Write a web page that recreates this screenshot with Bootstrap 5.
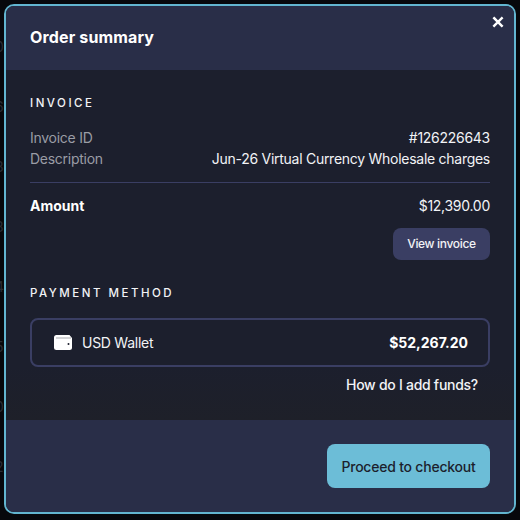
<!DOCTYPE html>
<html lang="en">
<head>
<meta charset="utf-8">
<title>Order summary</title>
<link href="https://cdn.jsdelivr.net/npm/bootstrap@5.3.0/dist/css/bootstrap.min.css" rel="stylesheet">
<style>
html, body { height: 520px; overflow: hidden; }
body { background: #07080c; font-family: Inter, "Liberation Sans", sans-serif; font-size: 14px; letter-spacing: -0.27px; color: #f2f3f6; }
.backdrop-digits { position: absolute; left: -5px; top: 17px; width: 12px; color: #2b2d33; font-size: 14px; line-height: 60px; letter-spacing: 0; }
.summary-shell { position: absolute; left: 4px; top: 4px; width: 512px; height: 510px; border: 2px solid #62b5d0; border-radius: 10px; background: #1c1f2d; overflow: hidden; }
.summary-head { height: 64px; background: #292e48; padding: 0 24px; }
.summary-title { font-size: 16px; font-weight: 700; letter-spacing: .15px; color: #fff; margin: 0; }
.summary-close { position: absolute; right: 10px; top: 10px; width: 12px; height: 12px; padding: 0; background: none; border: 0; line-height: 0; }
.summary-body { height: 350px; padding: 24px 24px 0; background: linear-gradient(#1c1f2d 85%, #1e2029); }
.summary-label { font-size: 11.5px; font-weight: 500; letter-spacing: 2.5px; color: #f2f3f6; line-height: 18px; margin: 0; }
.summary-row { line-height: 21px; }
.rows-gap { margin-top: 15px; }
.rule-gap { margin: 13px 0 12px; }
.button-gap { margin-top: 12px; }
.summary-muted { color: #9a9ca5; }
.summary-rule { border: 0; border-top: 1px solid #3a3e63; opacity: 1; }
.summary-strong { font-weight: 700; color: #fff; letter-spacing: 0; }
.view-btn { width: 97px; height: 32px; background: #3a3e63; color: #f2f3f6; border: 0; border-radius: 8px; font-size: 12px; font-weight: 500; letter-spacing: -0.33px; padding: 0; }
.wallet-box { height: 49px; border: 2px solid #3a3e63; border-radius: 8px; padding: 0 20px 0 22px; }
.wallet-gap { gap: 10px; }
.funds-link { color: #f2f3f6; font-weight: 500; text-decoration: none; margin-right: 12px; }
.funds-gap { margin-top: 7px; }
.summary-foot { height: 92px; background: #292e48; padding: 0 24px; }
.checkout-btn { width: 163px; height: 44px; background: #6cbdd7; color: #1c1f2d; border: 0; border-radius: 8px; font-size: 14px; font-weight: 500; letter-spacing: -0.22px; padding: 0; }
</style>
</head>
<body>
<div class="backdrop-digits" aria-hidden="true">0<br>6<br>3<br>8<br>4<br>5<br>0<br>2</div>
<div class="summary-shell d-flex flex-column">
  <div class="summary-head d-flex align-items-center">
    <h1 class="summary-title">Order summary</h1>
  </div>
  <button class="summary-close" type="button" aria-label="Close">
    <svg width="12" height="12" viewBox="0 0 12 12"><path d="M2.2 2.2L9.8 9.8M9.8 2.2L2.2 9.8" stroke="#fff" stroke-width="2.4" stroke-linecap="square"/></svg>
  </button>
  <div class="summary-body">
    <p class="summary-label">INVOICE</p>
    <div class="summary-row d-flex justify-content-between rows-gap"><span class="summary-muted">Invoice ID</span><span>#126226643</span></div>
    <div class="summary-row d-flex justify-content-between"><span class="summary-muted">Description</span><span>Jun-26 Virtual Currency Wholesale charges</span></div>
    <hr class="summary-rule rule-gap">
    <div class="summary-row d-flex justify-content-between"><span class="summary-strong">Amount</span><span>$12,390.00</span></div>
    <div class="d-flex justify-content-end button-gap"><button class="view-btn" type="button">View invoice</button></div>
    <p class="summary-label mt-4">PAYMENT METHOD</p>
    <div class="wallet-box d-flex align-items-center justify-content-between mt-3">
      <div class="d-flex align-items-center wallet-gap">
        <svg width="18" height="15" viewBox="0 0 18 15"><rect width="18" height="15" rx="2.5" fill="#fff"/><path d="M2 3H17" stroke="#1c1f2d" stroke-width=".7" opacity=".55"/><path d="M15.5 0L18 3V0Z" fill="#1c1f2d"/><circle cx="14.5" cy="9" r="1" fill="#1c1f2d"/></svg>
        <span>USD Wallet</span>
      </div>
      <span class="summary-strong">$52,267.20</span>
    </div>
    <div class="d-flex justify-content-end funds-gap"><a class="funds-link" href="#">How do I add funds?</a></div>
  </div>
  <div class="summary-foot d-flex align-items-center justify-content-end">
    <button class="checkout-btn" type="button">Proceed to checkout</button>
  </div>
</div>
<script src="https://cdn.jsdelivr.net/npm/bootstrap@5.3.0/dist/js/bootstrap.bundle.min.js"></script>
</body>
</html>
